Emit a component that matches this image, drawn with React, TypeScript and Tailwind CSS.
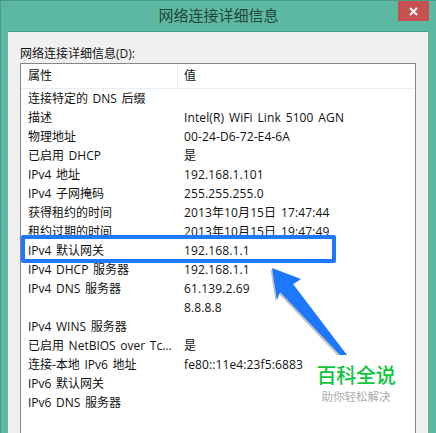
const FONT = `font-['Open_Sans','Noto_Sans_CJK_SC',sans-serif]`

const rows: [string, string][] = [
  ['连接特定的 DNS 后缀', ''],
  ['描述', 'Intel(R) WiFi Link 5100 AGN'],
  ['物理地址', '00-24-D6-72-E4-6A'],
  ['已启用 DHCP', '是'],
  ['IPv4 地址', '192.168.1.101'],
  ['IPv4 子网掩码', '255.255.255.0'],
  ['获得租约的时间', '2013年10月15日 17:47:44'],
  ['租约过期的时间', '2013年10月15日 19:47:49'],
  ['IPv4 默认网关', '192.168.1.1'],
  ['IPv4 DHCP 服务器', '192.168.1.1'],
  ['IPv4 DNS 服务器', '61.139.2.69'],
  ['', '8.8.8.8'],
  ['IPv4 WINS 服务器', ''],
  ['已启用 NetBIOS over Tc...', '是'],
  ['连接-本地 IPv6 地址', 'fe80::11e4:23f5:6883'],
  ['IPv6 默认网关', ''],
  ['IPv6 DNS 服务器', ''],
]

export default function App() {
  return (
    <div className={`${FONT} w-[436px] h-[433px] overflow-hidden bg-[#5cb8a1] border-l border-t border-[#4a9c88] text-[12px] text-[#111] [word-spacing:1.5px] flex flex-col relative`}>
      {/* Title bar */}
      <div className="h-[30px] shrink-0 relative flex items-center justify-center pb-[2px]">
        <span className="text-[15px] text-[#24453d]">网络连接详细信息</span>
        <div className="absolute top-0 right-[7px] w-[31px] h-[20px] bg-[#c75050] flex items-center justify-center">
          <svg width="9" height="9" viewBox="0 0 9 9">
            <path d="M1 1l7 7M8 1l-7 7" stroke="#fff" strokeWidth="2" />
          </svg>
        </div>
      </div>

      {/* Dialog body */}
      <div className="ml-[7px] mr-[8px] flex-1 bg-[#f0f0f0] px-[12px] pt-[12px] border-t border-[#4a9c88]">
        <div className="h-[19px] leading-[19px] text-[12px]">网络连接详细信息(D):</div>
        <div className="h-[400px] bg-white border border-[#82878f]">
          <div className="h-[25px] flex border-b border-[#e6eefa] mr-[1px]">
            <div className="w-[157px] pl-[7px] border-r border-[#e6eefa] leading-[24px]">属性</div>
            <div className="pl-[6px] leading-[24px]">值</div>
          </div>
          <div>
            {rows.map((r, i) => (
              <div key={i} className="h-[19px] flex leading-[19px] whitespace-nowrap">
                <div className="w-[157px] pl-[7px] shrink-0">{r[0]}</div>
                <div className="pl-[6px] tracking-[0.12px]">{r[1]}</div>
              </div>
            ))}
          </div>
        </div>
      </div>

      {/* Highlight box */}
      <div className="absolute left-[20px] top-[234px] w-[315px] h-[28px] border-[4px] border-[#1e78ff] rounded-[2px]" />

      {/* Arrow */}
      <svg className="absolute -left-px -top-px" width="436" height="433" viewBox="0 0 436 433">
        <path d="M272 268L301 279L293 284L347 355H340L280 292L277 300Z" fill="#777" opacity="0.45" transform="translate(-1.5 1.5)" />
        <path d="M272 268L301 279L293 284L347 355H340L280 292L277 300Z" fill="#1e78ff" />
      </svg>

      {/* Watermark */}
      <div className="absolute left-[309px] top-[354px] w-[92px] h-[50px] flex flex-col items-center bg-white">
        <span className="text-[20px] leading-[28px] mt-[7px] font-medium tracking-[-0.3px] text-[#0ec73c]">百科全说</span>
        <span className="text-[11.5px] leading-[16px] -mt-[1px] text-[#adadad]">助你轻松解决</span>
      </div>
    </div>
  )
}
